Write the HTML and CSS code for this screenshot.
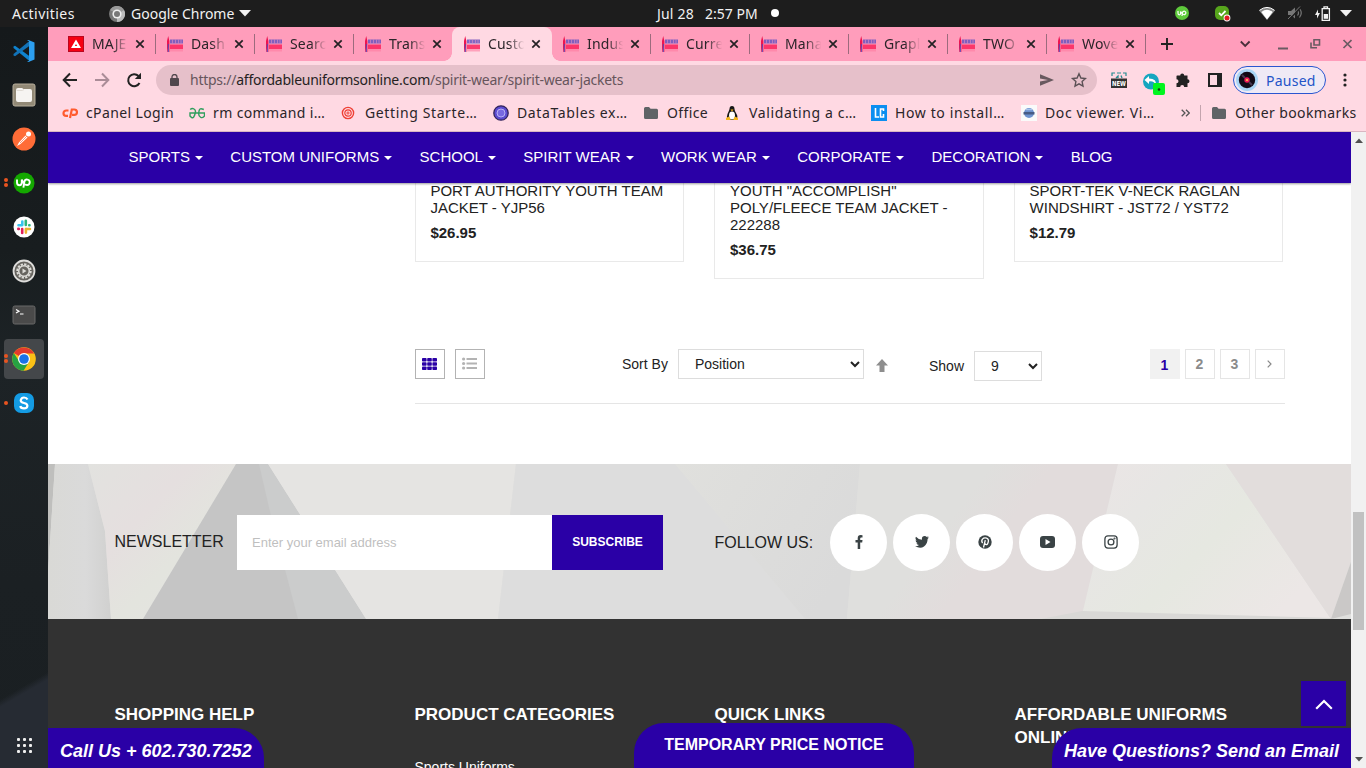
FILE: index.html
```html
<!DOCTYPE html>
<html lang="en">
<head>
<meta charset="utf-8">
<title>Custom Spirit Wear Jackets</title>
<link rel="stylesheet" href="styles.css">
</head>
<body>
<svg class="defs" width="0" height="0">
  <symbol id="fav" viewBox="0 0 16 16">
    <path d="M0 16V5L1.200 0 2.400 5v11H1.800l-.6-6-.6 6z" fill="#ee1450"/>
    <path d="M.8 8h1v8h-1z" fill="#5646b5"/>
    <path d="M3 3.500h13v4H3z" fill="#6a55bd" opacity=".85"/>
    <path d="M3 8.500h13v4.500H3z" fill="#fb2b62" opacity=".9"/>
    <path d="M3 13h13v2.500H3z" fill="#ff7ba0" opacity=".6"/>
    <path d="M5.500 3.500v4M8.500 3.500v4M11.500 3.500v4M14 3.500v4" stroke="#e58fc0" stroke-width=".6"/>
  </symbol>
  <symbol id="x" viewBox="0 0 10 10"><path d="M1.300 1.300l7.400 7.400M8.700 1.300L1.300 8.700" stroke="#252124" stroke-width="1.700" fill="none"/></symbol>
  <symbol id="folder" viewBox="0 0 14 12"><path d="M0 1.500Q0 0 1.500 0H5l1.600 1.700h6Q14 1.700 14 3.200v7.300Q14 12 12.500 12h-11Q0 12 0 10.500z" fill="#5f6366"/></symbol>
</svg>

<header class="topbar">
  <div class="top-left">
    <span class="activities">Activities</span>
    <svg width="16" height="16" viewBox="0 0 16 16"><circle cx="8" cy="8" r="8" fill="#777"/><path d="M8 8L1 4a8 8 0 0 1 14 0z" fill="#999"/><path d="M8 8l7-4a8 8 0 0 1-7 12z" fill="#bbb"/><circle cx="8" cy="8" r="4.600" fill="#eee"/><circle cx="8" cy="8" r="3" fill="#777"/></svg>
    <span class="app">Google Chrome</span>
    <svg width="12" height="7"><path d="M0 0h12L6 6.500z" fill="#f2f2f2"/></svg>
  </div>
  <div class="clock"><span>Jul 28</span><span>2:57 PM</span><i class="dot"></i></div>
  <div class="tray">
    <svg width="14" height="14" viewBox="0 0 14 14"><circle cx="7" cy="7" r="7" fill="#5ec93b"/><path d="M3 5v2.300q0 1.500 1.300 1.500t1.300-1.500V5.500q1.500 3 3 3A1.700 1.700 0 1 0 7.500 6.500L7 10" fill="none" stroke="#fff" stroke-width="1.200"/></svg>
    <svg width="17" height="17" viewBox="0 0 17 17"><rect x="1" y="1" width="14" height="14" rx="5" fill="#57a51c"/><path d="M5 8l2.300 2.300L11.500 6" stroke="#fff" stroke-width="1.800" fill="none"/><circle cx="13" cy="13" r="3.400" fill="#fff"/><circle cx="13" cy="13" r="2.500" fill="#e01b24"/></svg>
    <svg width="16" height="13" viewBox="0 0 16 13"><path d="M0 3.500Q8-2.500 16 3.500L8 13z" fill="#888"/><path d="M2.300 5Q8 .5 13.700 5L8 12.500z" fill="#fff"/><path d="M.5 3.300Q8-2.500 15.500 3.300" fill="none" stroke="#fff"/></svg>
    <svg width="16" height="14" viewBox="0 0 16 14"><path d="M1 5h3l4-3.500v11L4 9H1z" fill="#777"/><path d="M10.500 4.500q2 2.500 0 5M12.500 2.500q3.500 4.500 0 9" fill="none" stroke="#777" stroke-width="1.200"/><path d="M2.500 13.500L14 1" stroke="#1d1d1d" stroke-width="1.500"/><path d="M1 13L13 .5" stroke="#777"/></svg>
    <svg width="16" height="15" viewBox="0 0 16 15"><path d="M3 3.500v3.500h2L2 12.500V9H0z" fill="#eee"/><path d="M7.200 2.700h7.200v11.600H7.200zM9 2V.8h3.500V2" stroke="#f2f2f2" stroke-width="1.300" fill="none"/><path d="M8.700 8H13v4.800H8.700z" fill="#f2f2f2"/></svg>
    <svg width="12" height="7"><path d="M0 0h12L6 6.500z" fill="#f2f2f2"/></svg>
  </div>
</header>

<div class="desk">
<aside class="dock">
  <div class="di"><svg width="24" height="24" viewBox="0 0 24 24"><path d="M1.500 7.500L3 6.800 18 17.500v5L1.500 9z" fill="#0f83cf"/><path d="M1.500 16.500L3 17.200 18 6.500v-5L1.500 15z" fill="#1273b8"/><path d="M16.500 1L22.500 3.500v17L16.500 23 15 22h2V2h-2z" fill="#2c9ff0"/></svg></div>
  <div class="di"><svg width="24" height="24" viewBox="0 0 24 24"><rect x="1" y="1" width="22" height="22" rx="2" fill="#928976" stroke="#b7ae9b"/><path d="M4 7q0-2 2-2h4l1.500 1H18q2 0 2 2v9q0 2-2 2H6q-2 0-2-2z" fill="#f6f4f1"/><path d="M4.500 7.500h6L12 6.500" fill="none" stroke="#e0dbd4"/></svg></div>
  <div class="di"><svg width="24" height="24" viewBox="0 0 24 24"><circle cx="12" cy="12" r="11.500" fill="#ff6c37"/><path d="M5 19l2-3.500 6.500-7 2 2-7 6.500z" fill="#fff"/><circle cx="16.500" cy="7" r="2.500" fill="#fff"/><path d="M8 16l7-7" stroke="#ff6c37" stroke-width=".7"/></svg></div>
  <div class="di two"><svg width="22" height="22" viewBox="0 0 22 22"><circle cx="11" cy="11" r="10.500" fill="#14a800"/><path d="M4 7.500v3q0 2.700 2.400 2.700t2.400-2.700v-3q1.800 5.500 5.200 5.500a2.700 2.700 0 1 0-2.600-3.300l-1 6" fill="none" stroke="#fff" stroke-width="1.900"/></svg></div>
  <div class="di"><svg width="22" height="22" viewBox="0 0 22 22"><circle cx="11" cy="11" r="10.500" fill="#fff"/><g stroke-width="2.600" stroke-linecap="round"><path d="M9.300 5.500v3.500M5.500 9.300H9" stroke="#36c5f0"/><path d="M12.800 4.800V9M16.500 9.300h-.3" stroke="#2eb67d"/><path d="M13 13h4M12.900 13v3.600" stroke="#ecb22e"/><path d="M9.200 13v4M5.300 12.900h.5" stroke="#e01e5a"/></g></svg></div>
  <div class="di"><svg width="24" height="24" viewBox="0 0 24 24"><circle cx="12" cy="12" r="10.500" fill="#66645f" stroke="#dedddb" stroke-width="1.800"/><circle cx="12" cy="12" r="6.700" fill="none" stroke="#dddcd8" stroke-width="2" stroke-dasharray="2.300 1.200"/><circle cx="12" cy="12" r="5.300" fill="none" stroke="#dddcd8" stroke-width="1.500"/><path d="M10.500 9.500l4 2.500-4 2.500z" fill="#dddcd8"/></svg></div>
  <div class="di"><svg width="24" height="20" viewBox="0 0 24 20"><rect x="1" y="1" width="22" height="18" rx="1.800" fill="#4a4a4a" stroke="#686868"/><path d="M4 4.500l3 1.700L4 8M8 9h3.500" stroke="#fff" fill="none" stroke-width="1.200"/></svg></div>
  <div class="di two on"><svg width="24" height="24" viewBox="0 0 24 24"><circle cx="12" cy="12" r="11.800" fill="#fbc116"/><path d="M12 12L1.800 6A11.800 11.800 0 0 1 22.200 6.500H12z" fill="#e33b2e"/><path d="M1.800 6A11.800 11.800 0 0 0 11.500 23.800L17 15 7.500 15z" fill="#27a243"/><circle cx="12" cy="12" r="6" fill="#fff"/><circle cx="12" cy="12" r="4.800" fill="#1a73e8"/></svg></div>
  <div class="di one"><svg width="22" height="22" viewBox="0 0 22 22"><rect x="1" y="1" width="20" height="20" rx="7" fill="#149be3"/><path d="M14.500 7.500Q13.500 5.500 11 5.500T7.700 8.200Q7.700 10.300 11 11t3.400 2.700Q14.400 16.300 11 16.300T7.300 14" fill="none" stroke="#fff" stroke-width="2.200"/></svg></div>
  <div class="apps"><i></i><i></i><i></i><i></i><i></i><i></i><i></i><i></i><i></i></div>
</aside>

<section class="browser">
  <div class="tabs">
    <div class="tab"><svg class="fi" width="16" height="16" viewBox="0 0 16 16"><path d="M0 0h16v16H0z" fill="#b80720"/><path d="M1 1h14v14H1z" fill="#f60012"/><path d="M8 3.500L13 12H3zM8 8l-1.200 2h2.400z" fill="#fff" fill-rule="evenodd"/></svg><span>MAJE</span><svg class="x"><use href="#x"/></svg></div>
    <div class="tab"><svg class="fi"><use href="#fav"/></svg><span>Dash</span><svg class="x"><use href="#x"/></svg></div>
    <div class="tab"><svg class="fi"><use href="#fav"/></svg><span>Searc</span><svg class="x"><use href="#x"/></svg></div>
    <div class="tab nosep"><svg class="fi"><use href="#fav"/></svg><span>Trans</span><svg class="x"><use href="#x"/></svg></div>
    <div class="tab active"><svg class="fi"><use href="#fav"/></svg><span>Custo</span><svg class="x"><use href="#x"/></svg></div>
    <div class="tab"><svg class="fi"><use href="#fav"/></svg><span>Indus</span><svg class="x"><use href="#x"/></svg></div>
    <div class="tab"><svg class="fi"><use href="#fav"/></svg><span>Curre</span><svg class="x"><use href="#x"/></svg></div>
    <div class="tab"><svg class="fi"><use href="#fav"/></svg><span>Mana</span><svg class="x"><use href="#x"/></svg></div>
    <div class="tab"><svg class="fi"><use href="#fav"/></svg><span>Grapl</span><svg class="x"><use href="#x"/></svg></div>
    <div class="tab"><svg class="fi"><use href="#fav"/></svg><span>TWO</span><svg class="x"><use href="#x"/></svg></div>
    <div class="tab"><svg class="fi"><use href="#fav"/></svg><span>Wove</span><svg class="x"><use href="#x"/></svg></div>
    <svg class="plus" width="12" height="12"><path d="M6 0v12M0 6h12" stroke="#222" stroke-width="1.900"/></svg>
    <svg class="win" width="112" height="12" viewBox="0 0 112 12"><path d="M.8 3.500L5.200 8l4.400-4.500" stroke="#4a2f3b" stroke-width="1.800" fill="none"/><path d="M38 10.500h10" stroke="#6b5a62" stroke-width="2"/><path d="M74 1.700h5.500V7H74zM71 4.500v5.300h6" stroke="#6b5a62" stroke-width="1.600" fill="none"/><path d="M103.500 2l8 8M111.500 2l-8 8" stroke="#6b5a62" stroke-width="1.700"/></svg>
  </div>

  <div class="toolbar">
    <svg width="84" height="16" viewBox="0 0 84 16"><g fill="none" stroke-width="2"><path d="M16 8H3M9 1.500L2.700 8 9 14.500" stroke="#222"/><path d="M34 8h13M41 1.500L47.300 8 41 14.500" stroke="#aa8c97"/><path d="M78.500 11A6 6 0 1 1 77.500 4" stroke="#222"/></g><path d="M80 .8V7h-6.200z" fill="#222"/></svg>
    <div class="omni">
      <svg width="9" height="12" viewBox="0 0 9 12"><rect y="4" width="9" height="8" rx="1" fill="#50474d"/><path d="M2 5V3a2.500 2.500 0 0 1 5 0v2" fill="none" stroke="#50474d" stroke-width="1.300"/></svg>
      <span class="url">https://<b>affordableuniformsonline.com</b>/spirit-wear/spirit-wear-jackets</span>
      <svg class="omr" width="48" height="16" viewBox="0 0 48 16"><path d="M1 2.300l14 5.700-14 5.700V9.400L9 8 1 6.600z" fill="#68595f"/><path d="M40 1.800l1.900 4.200 4.600.5-3.400 3.100.9 4.500-4-2.300-4 2.300.9-4.500-3.400-3.100 4.600-.5z" fill="none" stroke="#5b5055" stroke-width="1.400"/></svg>
    </div>
    <svg class="ext" width="16" height="16" viewBox="0 0 16 16"><path d="M1 4V1h3M6 1h4M12 1h3v3" stroke="#278b91" fill="none" stroke-width="1.200"/><path d="M5 6l2-2v2M10 3.500l1 2.500" stroke="#278b91" fill="none" stroke-width="1.300"/><path d="M0 6.500h16V16H0z" fill="#333"/><text x="1" y="13.700" class="newt" textLength="14" lengthAdjust="spacingAndGlyphs">NEW</text></svg>
    <svg class="ext2" width="24" height="22" viewBox="0 0 24 22"><circle cx="9" cy="8.500" r="8" fill="#16a6bf"/><path d="M7 3L2.500 7 7 11V8.500q5-1 7 4Q15 5.500 7 5.500z" fill="#fff"/><rect x="11" y="10" width="12" height="12" rx="2" fill="#00f51e"/><circle cx="17" cy="16.500" r="1.300" fill="#143b14"/></svg>
    <svg class="ext3" width="16" height="16" viewBox="0 0 16 16"><path d="M2 3.500h3.200a2 2 0 1 1 4 0h3.300v3.700a2 2 0 1 1 0 4V15H9.200a2 2 0 0 0-4 0H1.500v-3.800a2 2 0 0 0 0-4V4z" fill="#222"/></svg>
    <svg class="ext4" width="14" height="14"><path d="M1 1h12v12H1z" fill="none" stroke="#222" stroke-width="2"/><path d="M9 0h5v14H9z" fill="#222"/></svg>
    <div class="paused"><svg width="22" height="22" viewBox="0 0 22 22"><circle cx="11" cy="11" r="11" fill="#a9d5f5"/><circle cx="11" cy="11" r="8.200" fill="#120a16"/><path d="M6 6l3 3M13 13l3 3" stroke="#46384f" stroke-width="2"/><circle cx="11" cy="11" r="2.700" fill="#ee1b58"/><circle cx="11" cy="11" r="1" fill="#ffd54a"/></svg><span>Paused</span></div>
    <svg class="dots" width="4" height="14"><circle cx="2" cy="2" r="1.600"/><circle cx="2" cy="7" r="1.600"/><circle cx="2" cy="12" r="1.600"/></svg>
  </div>

  <div class="marks">
    <div class="bm"><svg width="16" height="16" viewBox="0 0 16 16"><path d="M6.500 5.500H4.200a2.700 2.700 0 0 0 0 5.400H6M8 13l1.800-8.500H12.300a2.500 2.500 0 0 1 0 5.300H10" stroke="#ff5b2e" stroke-width="2.200" fill="none"/></svg><span>cPanel Login</span></div>
    <div class="bm"><svg width="16" height="16" viewBox="0 0 16 16"><path d="M1.200 4.500Q3 2.800 5 4t1.300 4T4.500 12.300 1 11V8h14.500v3q-1.500 2.300-3.800 1.300T9.700 8 11 4t3.800.5" stroke="#2f9e5d" stroke-width="1.400" fill="none"/></svg><span>rm command i…</span></div>
    <div class="bm"><svg width="16" height="16" viewBox="0 0 16 16" fill="none" stroke="#ef4035"><circle cx="7" cy="8" r="5.600" stroke-width="1.400"/><circle cx="7" cy="8" r="3.200" stroke-width="1.200"/><circle cx="7" cy="8" r="1.100"/></svg><span>Getting Starte…</span></div>
    <div class="bm"><svg width="16" height="16" viewBox="0 0 16 16"><circle cx="8" cy="8" r="7.200" fill="#5b4bd0" stroke="#33245c" stroke-width="1.300"/><circle cx="8" cy="8" r="4" fill="#7769e0" stroke="#b7b0f4"/></svg><span>DataTables ex…</span></div>
    <div class="bm"><svg class="fo"><use href="#folder"/></svg><span>Office</span></div>
    <div class="bm"><svg width="16" height="16" viewBox="0 0 16 16"><path d="M4.500 4Q4.500 1 7 1T9.500 4q0 2 2 5t-.5 6H3q-2-3-.5-6t2-5z" fill="#171717"/><ellipse cx="7" cy="10.500" rx="3" ry="4" fill="#fff"/><path d="M5.500 4.500h3L7 6.500zM1 13l3-1.500L6 15H1zM13 13l-3-1.500L8 15h5z" fill="#f6b51a"/></svg><span>Validating a c…</span></div>
    <div class="bm"><svg width="16" height="16"><path d="M0 0h16v16H0z" fill="#0b8ef0"/><path d="M4.500 3v9H8M12.500 6V4h-3v8h3V9" stroke="#fff" stroke-width="1.600" fill="none"/></svg><span>How to install…</span></div>
    <div class="bm"><svg width="16" height="16"><path d="M0 0h16v16H0z" fill="#fafafa"/><circle cx="8" cy="8" r="5" fill="#6d92cf"/><path d="M2.500 7h11v2.500h-11z" fill="#465b85"/><path d="M5 4.500h6" stroke="#a8c3ea" stroke-width="1.500"/></svg><span>Doc viewer. Vi…</span></div>
    <svg class="more" width="9" height="8"><path d="M.7.700L4 4 .7 7.300M5 .7L8.300 4 5 7.300" fill="none" stroke="#555" stroke-width="1.300"/></svg>
    <i class="vsep"></i>
    <div class="bm other"><svg class="fo"><use href="#folder"/></svg><span>Other bookmarks</span></div>
  </div>

  <div class="view">
    <main class="site">
      <nav class="nav"><a class="c">SPORTS</a><a class="c">CUSTOM UNIFORMS</a><a class="c">SCHOOL</a><a class="c">SPIRIT WEAR</a><a class="c">WORK WEAR</a><a class="c">CORPORATE</a><a class="c">DECORATION</a><a>BLOG</a></nav>
      <div class="cards">
        <article><h3>PORT AUTHORITY YOUTH TEAM JACKET - YJP56</h3><p>$26.95</p></article>
        <article><h3>YOUTH "ACCOMPLISH" POLY/FLEECE TEAM JACKET - 222288</h3><p>$36.75</p></article>
        <article><h3>SPORT-TEK V-NECK RAGLAN WINDSHIRT - JST72 / YST72</h3><p>$12.79</p></article>
      </div>
      <div class="sorter">
        <span class="mode"><svg width="15" height="12" viewBox="0 0 15 12"><g fill="#2a00a6"><rect width="4.600" height="3.500" rx=".8"/><rect x="5.200" width="4.600" height="3.500" rx=".8"/><rect x="10.400" width="4.600" height="3.500" rx=".8"/><rect y="4.200" width="4.600" height="3.500" rx=".8"/><rect x="5.200" y="4.200" width="4.600" height="3.500" rx=".8"/><rect x="10.400" y="4.200" width="4.600" height="3.500" rx=".8"/><rect y="8.500" width="4.600" height="3.500" rx=".8"/><rect x="5.200" y="8.500" width="4.600" height="3.500" rx=".8"/><rect x="10.400" y="8.500" width="4.600" height="3.500" rx=".8"/></g></svg></span>
        <span class="mode"><svg width="15" height="13" viewBox="0 0 15 13" fill="#b3b3b3"><circle cx="1.600" cy="2" r="1.600"/><circle cx="1.600" cy="6.500" r="1.600"/><circle cx="1.600" cy="11" r="1.600"/><path d="M4.500 1H15v2H4.500zM4.500 5.500H15v2H4.500zM4.500 10H15v2H4.500z"/></svg></span>
        <label class="sort">Sort By</label>
        <div class="sel pos">Position<svg width="10" height="7"><path d="M1 1l4 4 4-4" fill="none" stroke="#222" stroke-width="2"/></svg></div>
        <svg class="up" width="12" height="13"><path d="M6 0l6 6.500H8.500V13h-5V6.500H0z" fill="#8e8e8e"/></svg>
        <label class="show">Show</label>
        <div class="sel num">9<svg width="10" height="7"><path d="M1 1l4 4 4-4" fill="none" stroke="#222" stroke-width="2"/></svg></div>
        <div class="pages"><b class="cur">1</b><b>2</b><b>3</b><b><svg width="5" height="8"><path d="M.7.700L4 4 .7 7.300" fill="none" stroke="#888" stroke-width="1.200"/></svg></b></div>
      </div>
      <section class="news">
        <svg class="facets" width="1303" height="155" viewBox="0 0 1303 155">
          <defs>
            <linearGradient id="g1"><stop offset="0" stop-color="#d9d9d6"/><stop offset=".6" stop-color="#dadada"/><stop offset="1" stop-color="#d0d0cf"/></linearGradient>
            <linearGradient id="g2" x1="0" y1="0" x2="1" y2="1"><stop offset="0" stop-color="#e2e2df"/><stop offset=".35" stop-color="#e5dfdf"/><stop offset=".6" stop-color="#e3e4de"/><stop offset="1" stop-color="#e5e4e2"/></linearGradient>
            <linearGradient id="g3" x1="0" y1="0" x2="1" y2=".5"><stop offset="0" stop-color="#e0e0dd"/><stop offset="1" stop-color="#dadada"/></linearGradient>
            <linearGradient id="g4" x1="0" y1="0" x2="1" y2=".6"><stop offset="0" stop-color="#ebe5e5"/><stop offset=".3" stop-color="#e7e6e4"/><stop offset=".6" stop-color="#e6e8e1"/><stop offset="1" stop-color="#ece7e6"/></linearGradient>
            <linearGradient id="g5" gradientUnits="userSpaceOnUse" x1="895" y1="65" x2="935" y2="95"><stop offset="0" stop-color="#dfdfdd"/><stop offset="1" stop-color="#e2dcdc"/></linearGradient>
          </defs>
          <path d="M0 0h1303v155H0z" fill="#dfdfdd"/>
          <path d="M0 0h7L0 110z" fill="#bfbfbd"/>
          <path d="M7 0h33l17 67 6 88H0v-45z" fill="url(#g1)"/>
          <path d="M40 0h148L95 155H63l-6-88z" fill="url(#g2)"/>
          <path d="M188 0h32l98 155H95z" fill="#c5c5c5"/>
          <path d="M211 0h9l98 155h-68L223 52z" fill="#cbcccc"/>
          <path d="M220 0h248l-18 155H318z" fill="#e5e4e2"/>
          <path d="M468 0h159l130 155H450z" fill="#dddddd"/>
          <path d="M627 0h185l-13 155h-42z" fill="url(#g3)"/>
          <path d="M812 0h258l-36 152-50 3H799z" fill="url(#g5)"/>
          <path d="M1070 0h108l105 155-249-4z" fill="url(#g4)"/>
          <path d="M1178 0h125v98l-20 57z" fill="#e2dddc"/>
          <path d="M1303 98v52l-20 5z" fill="#cac8c7"/>
          <path d="M993 155l41-8 249 7v1z" fill="#d9d8d6"/>
        </svg>
        <div class="newsrow">
          <span class="lbl">NEWSLETTER</span><div class="inp">Enter your email address</div><div class="btn">SUBSCRIBE</div>
          <span class="lbl fol">FOLLOW US:</span>
          <div class="soc">
            <i><svg width="8" height="14" viewBox="0 0 8 14"><path d="M7.500.2v2.300H6.200q-1 0-1 1V5h2.300l-.3 2.400h-2V14H2.700V7.400H.5V5h2.200V3.200Q2.700 0 5.700 0z" fill="#3a4345"/></svg></i>
            <i><svg width="14" height="12" viewBox="0 0 14 12"><path d="M14 1.500l-1.400 1.600Q12.600 8 9 10.500T0 10.300q2.300.2 4-1.200Q2 8.800 1.400 7.200h1.300Q.6 6.400.5 4.300L1.700 4.700Q-.3 2.800 1 .7q2.300 2.800 6 3Q6.400 0 9.700 0q1.200 0 2.100.9L13.600.300l-1.200 1.500z" fill="#3a4345"/></svg></i>
            <i><svg width="14" height="14" viewBox="0 0 14 14"><circle cx="7" cy="7" r="6.700" fill="#3a4345"/><path d="M4.600 8Q3 6 4.500 4.200T8.600 3.200t1.500 4.300T7 8.800M7.300 5.200L5.500 12.500" stroke="#fff" stroke-width="1.300" fill="none"/></svg></i>
            <i><svg width="15" height="12" viewBox="0 0 15 12"><rect width="15" height="12" rx="3" fill="#3a4345"/><path d="M5.500 3l5 3-5 3z" fill="#fff"/></svg></i>
            <i><svg width="14" height="14" viewBox="0 0 14 14" fill="none" stroke="#3a4345" stroke-width="1.300"><rect x=".9" y=".9" width="12.200" height="12.200" rx="3"/><circle cx="7" cy="7" r="2.900"/><circle cx="10.500" cy="3.500" r=".4"/></svg></i>
          </div>
        </div>
      </section>
      <footer class="foot">
        <div><h4>SHOPPING HELP</h4></div>
        <div><h4>PRODUCT CATEGORIES</h4><p>Sports Uniforms</p></div>
        <div><h4>QUICK LINKS</h4></div>
        <div><h4>AFFORDABLE UNIFORMS ONLINE</h4></div>
      </footer>
      <div class="pill call">Call Us + 602.730.7252</div>
      <div class="pill notice">TEMPORARY PRICE NOTICE</div>
      <div class="pill ask">Have Questions? Send an Email</div>
      <div class="totop"><svg width="18" height="11"><path d="M1.200 9.800L9 2l7.800 7.800" fill="none" stroke="#fff" stroke-width="2.200"/></svg></div>
    </main>
    <div class="scroll"><svg width="8" height="5"><path d="M0 5l4-4.500L8 5z" fill="#505050"/></svg><i></i><svg width="8" height="5"><path d="M0 0h8L4 4.500z" fill="#505050"/></svg></div>
  </div>
</section>
</div>
</body>
</html>
```
FILE: styles.css
```css
* { box-sizing: border-box; }
body { margin: 0; width: 1366px; height: 768px; overflow: hidden; display: flex; flex-direction: column; font-family: "Noto Sans", "Open Sans", sans-serif; font-size: 14px; color: #2b2529; white-space: nowrap; }
svg { display: block; flex: none; }
i { font-style: normal; }
.defs { position: absolute; }

/* desktop top bar */
.topbar { height: 27px; flex: none; background: #1d1d1d; color: #f2f2f2; display: grid; grid-template-columns: 657px 509px 200px; align-items: center; }
.top-left { display: flex; align-items: center; padding-left: 12px; }
.activities { width: 97px; letter-spacing: .45px; }
.app { width: 108px; margin-left: 6px; }
.clock { display: flex; align-items: center; padding-bottom: 1px; }
.clock span { width: 48px; letter-spacing: .2px; }
.clock span + span { width: 66px; letter-spacing: 0; }
.dot { width: 8px; height: 8px; border-radius: 50%; background: #fff; }
.tray { display: flex; align-items: center; padding: 0 0 1px 9px; }
.tray svg:nth-child(2) { margin-left: 25px; }
.tray svg:nth-child(3) { margin-left: 28px; }
.tray svg:nth-child(4) { margin-left: 12px; }
.tray svg:nth-child(5) { margin-left: 12px; }
.tray svg:nth-child(6) { margin-left: 9px; }

/* application dock */
.desk { flex: 1; display: flex; min-height: 0; }
.dock { width: 48px; padding: 4px 4px 12px; display: flex; flex-direction: column; gap: 4px; background: linear-gradient(150deg, transparent 0 87.500%, #262b33 88.500%), linear-gradient(#15191b, #181d1f 30%, #1d2326 45%, #1b2023 75%, #1a1f22); }
.di { width: 40px; height: 40px; border-radius: 4px; display: flex; align-items: center; justify-content: center; position: relative; }
.di.on { background: #44474a; }
.one::before, .two::before { content: ""; position: absolute; left: 0; top: 18px; width: 4px; height: 4px; border-radius: 50%; background: #e95420; }
.two::before { top: 15px; box-shadow: 0 5px #e95420; }
.apps { margin: auto auto 0; display: grid; grid-template-columns: repeat(3, 3px); gap: 3px; padding-bottom: 3px; }
.apps i { width: 3px; height: 3px; border-radius: 1px; background: #eee; }

/* browser window */
.browser { flex: 1; min-width: 0; display: flex; flex-direction: column; background: #ffd9e3; }
.tabs { height: 34px; background: #ff9dbb; display: flex; padding-left: 8px; align-items: stretch; }
.tab { width: 99px; display: flex; align-items: center; padding-left: 12px; position: relative; }
.tab::after { content: ""; position: absolute; right: -1px; top: 7px; width: 1px; height: 20px; background: #9c6b7d; }
.tab.nosep::after, .tab.active::after { display: none; }
.fi { width: 16px; height: 16px; }
.tab span { width: 37px; margin: 0 7px 0 8px; overflow: hidden; font-size: 14px; line-height: 20px; letter-spacing: .15px; -webkit-mask-image: linear-gradient(90deg, #000 55%, transparent 98%); mask-image: linear-gradient(90deg, #000 55%, transparent 98%); }
.x { width: 10px; height: 10px; margin-left: -1px; }
.tab.active { background: #ffd9e3; border-radius: 8px 8px 0 0; width: 100px; margin-right: -1px; }
.tab.active::before { content: ""; position: absolute; left: -8px; right: -8px; bottom: 0; height: 8px; background: radial-gradient(circle at 0 0, transparent 7.500px, #ffd9e3 8px) 0 0 / 8px 8px no-repeat, radial-gradient(circle at 100% 0, transparent 7.500px, #ffd9e3 8px) 100% 0 / 8px 8px no-repeat; }
.plus { margin: 11px 0 0 16px; }
.win { margin: 11px 0 0 67px; }

.toolbar { height: 38px; display: flex; align-items: center; padding-left: 13px; }
.omni { margin-left: 11px; width: 941px; height: 30px; border-radius: 15px; background: #e6c0ca; display: flex; align-items: center; padding-left: 14px; }
.url { margin-left: 11px; width: 849px; color: #66555c; letter-spacing: -.25px; padding-bottom: 1px; }
.url b { font-weight: 400; color: #251f22; }
.ext { margin-left: 14px; }
.newt { font: 700 7px "DejaVu Sans", sans-serif; fill: #fff; }
.ext2 { margin: 8px 0 0 15px; }
.ext3 { margin-left: 9px; }
.ext4 { margin-left: 17px; }
.paused { margin-left: 11px; width: 93px; height: 28px; border: 1px solid #2a56d0; border-radius: 14px; background: #efe9f5; display: flex; align-items: center; padding-left: 2px; color: #2254c8; }
.paused span { margin-left: 8px; letter-spacing: .25px; }
.dots { margin-left: 17px; fill: #222; }

.marks { height: 33px; flex: none; border-bottom: 1px solid #d9b6c1; display: grid; grid-template-columns: 127px 152px 152px 151px 81px 146px 150px 160px 19px 12px auto; align-items: center; padding: 0 0 5px 14px; }
.bm { display: flex; align-items: center; }
.bm span { margin-left: 8px; letter-spacing: .38px; }
.bm:nth-child(3) span, .bm:nth-child(4) span, .bm:nth-child(6) span, .bm:nth-child(7) span, .bm:nth-child(8) span { letter-spacing: .62px; }
.fo { width: 14px; height: 12px; }
.bm .fo + span { margin-left: 9px; }
.vsep { width: 1px; height: 16px; background: #c4a4ae; }

/* web page */
.view { flex: 1; min-height: 0; display: flex; }
.site { width: 1303px; background: #fff; position: relative; overflow: hidden; font-family: "Liberation Sans", Arial, sans-serif; color: #222; }
.nav { height: 51px; background: #2a00a6; color: #fff; font-size: 15px; display: flex; align-items: center; padding: 0 0 2px 80.500px; box-shadow: 0 1px 2px rgba(0,0,0,.4); position: relative; }
.nav a { display: flex; align-items: center; }
.c::after { content: ""; border: 4px solid transparent; border-top: 4.500px solid #fff; border-bottom: 0; margin: 3px 27.400px 0 5px; }
.cards { display: grid; grid-template-columns: repeat(3, 269.600px); gap: 30px; padding-left: 366.700px; height: 166px; align-items: start; }
article { border: 1px solid #e9e9e9; border-top: 0; padding: 0 14.700px 20px; white-space: normal; font-size: 15px; line-height: 17px; }
h3 { margin: -1px 0 0; font-size: 15px; font-weight: 400; }
article p { margin: 8px 0 0; font-weight: 700; }
.sorter { margin-left: 367px; width: 870px; height: 55px; border-bottom: 1px solid #e5e5e5; display: flex; align-items: flex-start; font-size: 14px; }
.mode { width: 30px; height: 30px; border: 1px solid #b3b3b3; margin-right: 10px; display: flex; align-items: center; justify-content: center; padding: 0 1px 1px 0; }
.sorter label { line-height: 30px; font-size: 14px; }
.sort { margin-left: 127px; width: 56px; }
.sel { height: 30px; border: 1px solid #ddd; display: flex; align-items: center; justify-content: space-between; padding: 0 3px 0 16px; font-size: 14px; }
.pos { width: 186px; }
.up { margin: 10px 0 0 11.500px; }
.show { margin: 2px 0 0 41.500px; width: 45px; }
.num { width: 68px; margin-top: 2px; }
.pages { margin-left: auto; display: flex; gap: 5px; }
.pages b { width: 30px; height: 30px; border: 1px solid #e5e5e5; color: #8b8b8b; display: flex; align-items: center; justify-content: center; padding-right: 1px; }
.pages .cur { background: #f1f1f1; border-color: #f1f1f1; color: #2a00a6; padding-top: 2px; }
.news { height: 155px; margin-top: 60px; position: relative; }
.facets { position: absolute; inset: 0; }
.newsrow { position: relative; height: 155px; display: flex; align-items: center; padding: 2px 0 0 66.500px; }
.lbl { font-size: 16px; width: 122.500px; padding-bottom: 2px; }
.inp { width: 315px; height: 55px; background: #fff; color: #bfbfbf; font-size: 13px; line-height: 55px; padding-left: 15px; }
.btn { width: 111px; height: 55px; background: #2a00a6; color: #fff; font-weight: 700; font-size: 12px; line-height: 54px; text-align: center; }
.lbl.fol { margin-left: 51.500px; width: 115.500px; padding: 0; }
.soc { display: flex; gap: 6px; }
.soc i { width: 57px; height: 57px; border-radius: 50%; background: #fff; display: flex; align-items: center; justify-content: center; padding-bottom: 1px; }
.foot { height: 149px; background: #323232; color: #fff; display: grid; grid-template-columns: repeat(4, 300px); padding: 84px 0 0 66.500px; }
h4 { margin: 0; font-size: 17px; line-height: 23px; white-space: normal; width: 240px; }
.foot p { margin: 31px 0 0; font-size: 14px; line-height: 20px; }
.pill { position: absolute; bottom: 0; background: #2a00a6; color: #fff; font-weight: 700; font-size: 18px; }
.call, .ask { height: 40px; line-height: 46px; font-style: italic; }
.call { left: 0; width: 216px; padding-left: 12px; border-radius: 0 30px 0 0; }
.ask { right: 0; width: 299px; padding-left: 12px; border-radius: 30px 0 0 0; }
.notice { left: 586px; width: 280px; height: 45px; line-height: 44px; font-size: 16px; text-align: center; border-radius: 30px 30px 0 0; }
.totop { position: absolute; right: 5px; bottom: 42px; width: 45px; height: 45px; background: #2a00a6; display: flex; align-items: center; justify-content: center; padding-top: 2px; }
.scroll { width: 15px; background: #f1f1f1; display: flex; flex-direction: column; align-items: center; padding: 6px 0; }
.scroll i { width: 11px; height: 118px; margin: 369px 0 auto; background: #c1c1c1; }
```
